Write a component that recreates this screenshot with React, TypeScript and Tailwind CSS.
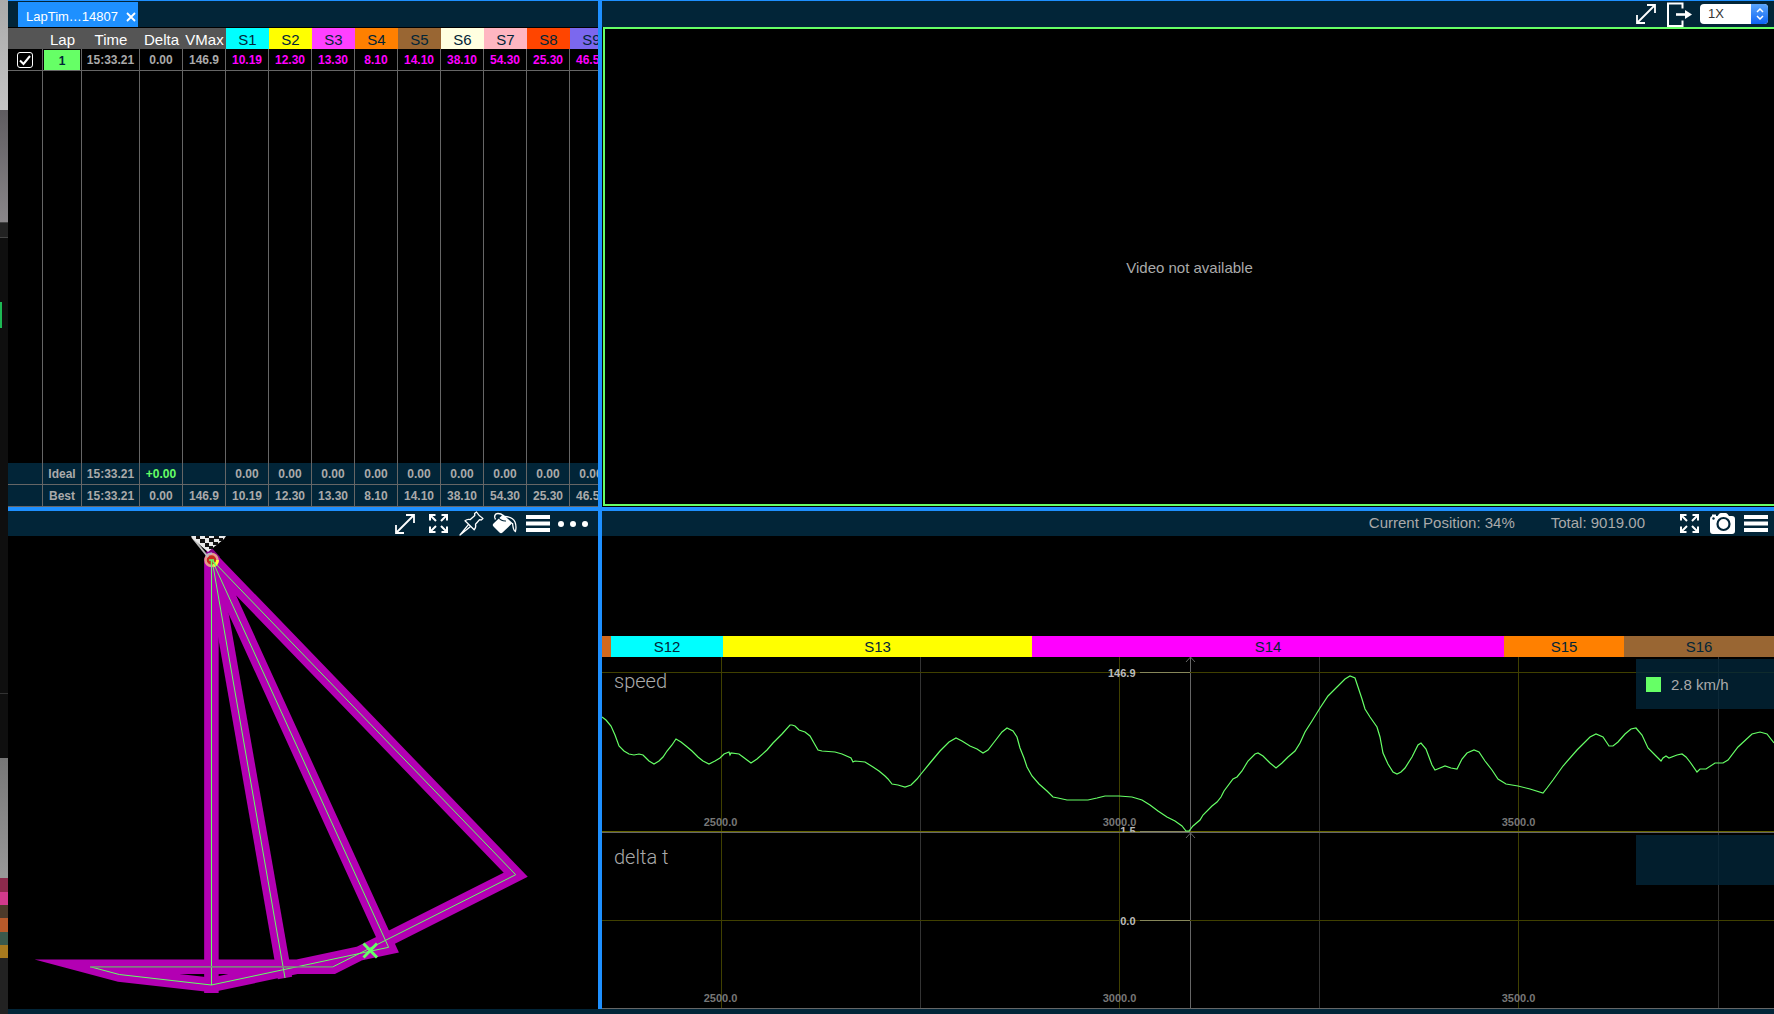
import React, { useState } from 'react';

interface Sector {
  name: string;
  time: string;
  headerClass: string;
}

const sectors: Sector[] = [
  { name: 'S1', time: '10.19', headerClass: 'bg-[#00ffff]' },
  { name: 'S2', time: '12.30', headerClass: 'bg-[#ffff00]' },
  { name: 'S3', time: '13.30', headerClass: 'bg-[#ff40ff]' },
  { name: 'S4', time: '8.10', headerClass: 'bg-[#ff8000]' },
  { name: 'S5', time: '14.10', headerClass: 'bg-[#996633]' },
  { name: 'S6', time: '38.10', headerClass: 'bg-[#ffffe0]' },
  { name: 'S7', time: '54.30', headerClass: 'bg-[#ffb6c1]' },
  { name: 'S8', time: '25.30', headerClass: 'bg-[#ff4500]' },
  { name: 'S9', time: '46.50', headerClass: 'bg-[#7b68ee]' },
];

const segments = [
  { name: '', className: 'flex-[9] bg-[#d2691e]' },
  { name: 'S12', className: 'flex-[112] bg-[#00ffff]' },
  { name: 'S13', className: 'flex-[309] bg-[#ffff00]' },
  { name: 'S14', className: 'flex-[472] bg-[#ff00ff]' },
  { name: 'S15', className: 'flex-[120] bg-[#ff8000]' },
  { name: 'S16', className: 'flex-[150] bg-[#996633]' },
];

const speedTrace = `602,717 606,720 611,726 615,735 619,746 624,751 629,754 634,755 639,754 643,755 646,758 649,761
654,764 659,761 663,757 667,751 672,745 676,739 681,742 686,746 692,751 698,757 703,761 709,764 715,761 720,758
724,754 729,752 730,755 731,753 739,754 743,757 751,763 757,759 767,750 773,743 782,734 790,725 792,725 795,726
799,730 805,732 810,736 814,743 818,750 822,751 835,752 842,754 851,758 853,762 855,761 865,762 873,767 879,771
885,776 888,779 892,784 898,785 905,787 911,785 917,779 921,774 930,763 940,751 949,742 956,738 962,741 970,746
977,749 983,753 988,750 995,741 1002,732 1007,728 1013,731 1017,737 1020,748 1024,758 1027,767 1032,776 1039,784
1047,791 1053,797 1058,798 1067,800 1088,800 1097,798 1105,796 1119,796 1132,797 1142,800 1150,805 1158,811
1167,817 1175,821 1182,826 1186,831 1189,831 1193,826 1200,820 1203,815 1212,806 1217,802 1221,797 1224,791
1233,779 1237,777 1242,771 1248,761 1255,754 1258,753 1263,756 1270,763 1276,768 1282,763 1288,757 1295,751
1300,743 1305,732 1312,721 1320,708 1328,696 1337,687 1345,679 1350,676 1355,678 1358,687 1362,699 1365,709
1370,717 1377,727 1380,737 1383,753 1388,764 1393,772 1397,774 1401,772 1405,768 1412,757 1418,745 1421,743
1426,749 1429,757 1432,765 1435,770 1440,768 1445,766 1451,768 1457,769 1462,759 1467,753 1474,750 1479,752
1485,761 1492,770 1498,779 1506,784 1518,786 1530,789 1543,793 1547,788 1553,780 1563,766 1577,750 1590,737
1596,734 1603,737 1609,746 1613,746 1618,742 1625,734 1631,729 1636,728 1642,735 1648,748 1655,755 1661,761
1663,758 1666,756 1669,758 1677,755 1682,754 1686,757 1690,762 1697,772 1700,769 1706,769 1715,763 1723,763
1728,760 1738,747 1752,734 1760,732 1767,734 1774,743`;

const majorLines = [721, 1119, 1518];
const minorLines = [920, 1319, 1718];

const IconButton: React.FC<{ label: string; wide?: boolean; children: React.ReactNode }> = ({ label, wide, children }) => (
  <button
    type="button"
    aria-label={label}
    className={`flex h-[25px] shrink-0 items-center justify-center text-white ${wide ? 'w-[30px]' : 'w-[25px]'}`}
  >
    {children}
  </button>
);

const DiagonalIcon = () => (
  <svg width="22" height="22" viewBox="0 0 22 22" fill="none" stroke="currentColor" strokeWidth="1.8">
    <path d="M1 20 19 2M11 2h8v8M1 12v8h8" />
  </svg>
);

const FullscreenIcon = () => (
  <svg width="19" height="19" viewBox="0 0 19 19" fill="none" stroke="currentColor" strokeWidth="2">
    <path d="M1 6.500V1h5.500M12.500 1H18v5.500M18 12.500V18h-5.500M6.500 18H1v-5.500" />
    <path d="m1.500 1.500 5.500 5.500M17.500 1.500 12 7M17.500 17.500 12 12M1.500 17.500 7 12" />
  </svg>
);

const PinIcon = () => (
  <svg width="25" height="25" viewBox="0 0 25 25" fill="none" stroke="currentColor" strokeWidth="1.3" strokeLinejoin="round">
    <path d="M17.500 1c1.500 2.500 4 5 6.500 6.500l-1.800 1.500-1.700-.3-4 4.500c.6 2.300.2 4-1.300 5.600L6 9.800c1.800-1.400 3.500-1.600 5.300-1.200l4.500-4.200-.2-1.800z" />
    <path d="M9.800 13.200 1 24l10.800-8.800" />
  </svg>
);

const FillIcon = () => (
  <svg width="25" height="23" viewBox="0 0 25 23" fill="none">
    <path d="M11 2.500 1.500 11.500q-1.500 1.500 0 3l6 6q1.500 1.500 3 0L20.500 11z" fill="white" />
    <path d="M3.500 7.500C1.500 4.500 3 1.500 6 1.500c4 0 8 3.500 8.500 7" stroke="white" strokeWidth="1.400" />
    <path d="M6 5c2 3 4.500 4.200 8 4" stroke="#022538" strokeWidth="1.200" />
    <path d="M12 4.500c5 0 9.500 2 11 5.500 1 2.500 1.300 6 .4 9.500-2.400-1-2.400-5-2.900-8.500" stroke="white" strokeWidth="1.300" />
  </svg>
);

const MenuIcon = () => (
  <svg width="24" height="17" viewBox="0 0 24 17" fill="currentColor">
    <path d="M0 0h24v4H0zM0 6.500h24v4H0zM0 13h24v4H0z" />
  </svg>
);

const DotsIcon = () => (
  <svg width="30" height="6" viewBox="0 0 30 6" fill="currentColor">
    <circle cx="3" cy="3" r="3" />
    <circle cx="15" cy="3" r="3" />
    <circle cx="27" cy="3" r="3" />
  </svg>
);

const CameraIcon = () => (
  <svg width="25" height="21" viewBox="0 0 25 21">
    <path
      d="M7.500 3 9 1q.8-1 2-1h4.500q1.200 0 2 1L19 3h3q3 0 3 3v12q0 3-3 3H3q-3 0-3-3V6q0-2.500 2-3V1.500h4V3z"
      fill="white"
    />
    <circle cx="13.500" cy="11" r="6" fill="white" stroke="#022538" strokeWidth="2.200" />
    <circle cx="3.500" cy="5.500" r="1.200" fill="#022538" />
  </svg>
);

const ExportIcon = () => (
  <svg width="25" height="25" viewBox="0 0 25 25" fill="none" stroke="white">
    <path d="M15.500 6.500V1.500H1v22.500h14.500v-5.500" strokeWidth="2" />
    <path d="M9 12.500h10" strokeWidth="2.600" />
    <path d="M18 8v9l7-4.500z" fill="white" stroke="none" />
  </svg>
);

const box = 'border-r border-b border-[#666] text-center';
const cell = 'border-r border-b border-[#666] px-0 pt-0.5 pb-0 text-center';

const LapTable = () => {
  const [checked, setChecked] = useState(true);

  return (
    <table className="h-full w-[605px] table-fixed border-separate border-spacing-0 text-[12px] leading-[19px] font-bold text-[#aaa]">
      <colgroup>
        <col className="w-[35px]" />
        <col className="w-[39px]" />
        <col className="w-[58px]" />
        <col className="w-[43px]" />
        <col className="w-[43px]" />
        {sectors.map(s => <col key={s.name} className="w-[43px]" />)}
      </colgroup>
      <thead>
        <tr className="h-[21px] bg-[#555] text-[15px] font-normal text-white">
          <th className="p-0" aria-label="Visible" />
          {['Lap', 'Time', 'Delta', 'VMax'].map(h => (
            <th key={h} className="px-0 pt-0.5 pb-0 text-center font-normal">{h}</th>
          ))}
          {sectors.map(s => (
            <th key={s.name} className={`px-0 pt-0.5 pb-0 text-center font-normal text-[#022538] ${s.headerClass}`}>{s.name}</th>
          ))}
        </tr>
      </thead>
      <tbody>
        <tr className="h-[22px]">
          <td className={`${box} p-0`}>
            <label className="relative ml-[9px] block size-4">
              <input
                type="checkbox"
                aria-label="Show lap 1"
                checked={checked}
                onChange={e => setChecked(e.target.checked)}
                className="block size-4 appearance-none rounded-[3px] border border-white bg-black"
              />
              {checked && (
                <svg className="pointer-events-none absolute inset-0" width="16" height="16" viewBox="0 0 16 16" fill="none" stroke="white" strokeWidth="2">
                  <path d="m3 8.500 3.500 3.500L13 4" />
                </svg>
              )}
            </label>
          </td>
          <td className={`${box} p-0 text-[#022538]`}>
            <div className="mx-px h-5 bg-[#66ff66] leading-[22px]">1</div>
          </td>
          <td className={cell}>15:33.21</td>
          <td className={cell}>0.00</td>
          <td className={cell}>146.9</td>
          {sectors.map(s => (
            <td key={s.name} className={`${cell} text-[#ff00ff]`}>{s.time}</td>
          ))}
        </tr>
        <tr aria-hidden="true">
          {Array.from({ length: 5 + sectors.length }, (_, i) => (
            <td key={i} className="border-r border-[#666] p-0" />
          ))}
        </tr>
      </tbody>
      <tfoot className="bg-[#022538]">
        <tr className="h-[22px]">
          <td className={cell} />
          <td className={cell}>Ideal</td>
          <td className={cell}>15:33.21</td>
          <td className={`${cell} text-[#66ff66]`}>+0.00</td>
          <td className={cell} />
          {sectors.map(s => <td key={s.name} className={cell}>0.00</td>)}
        </tr>
        <tr className="h-[22px]">
          <td className={cell} />
          <td className={cell}>Best</td>
          <td className={cell}>15:33.21</td>
          <td className={cell}>0.00</td>
          <td className={cell}>146.9</td>
          {sectors.map(s => <td key={s.name} className={cell}>{s.time}</td>)}
        </tr>
      </tfoot>
    </table>
  );
};

const TrackMap = () => (
  <svg className="block h-full w-full" viewBox="8 536 590 473" fill="none">
    {/* road surface */}
    <g stroke="#b300b3" strokeWidth="14.5" strokeMiterlimit="12">
      <path d="M212 560 515.700 874.700 333.200 966.700H90L119.300 974.500 211.400 985 388.600 947.300 212 560" />
      <path d="M211.400 558V993" />
      <path d="M212 560 285 978" />
    </g>
    <path d="m204 560 3-10 3-4 10 11-8 6z" fill="#8a008a" />
    {/* driven line */}
    <g stroke="#66ff66" strokeWidth="1">
      <path d="M212 560 515.700 874.700 333.200 966.700H90L119.300 974.500 211.400 985 388.600 947.300 212 560" />
      <path d="M211.500 560V985M212 560 285 978" />
    </g>
    <path d="M90 966.700H333" stroke="#808080" strokeWidth="1.500" />
    {/* start / finish */}
    <circle cx="211.500" cy="560" r="6" stroke="#e89a8c" strokeWidth="2.500" fill="#c8281e" />
    <path d="M217.500 560a6 6 0 0 1-4 5.700" stroke="#ffff33" strokeWidth="3" />
    <path d="M207 555a6 6 0 0 1 5-1.500" stroke="#b8b0c8" strokeWidth="2" />
    <path d="M209 560h5M211.500 560v7M213 561l3 5" stroke="#66ff66" strokeWidth="1.500" />
    <path d="M192 537 208 557" stroke="#bbb" strokeWidth="2" />
    <path d="M191 536h35l-2 3c-6 5-9 7-16 13L193 539z" fill="#e8e8e8" />
    <path
      d="M196 536h4v3h-4zM205 536h4v2h-4zM214 536h5v3h-5zM200 539h5v4h-5zM209 538h5v4h-5zM219 538h4v3h-4zM205 543h4v4h-4zM213 542h5v3h-5zM209 546h4v3h-4z"
      fill="#111"
    />
    {/* current position */}
    <path d="m363.500 943.500 13.500 14m0-14-13.500 14" stroke="#66ff66" strokeWidth="3" />
  </svg>
);

const Grid: React.FC<{ top: number; bottom: number }> = ({ top, bottom }) => (
  <>
    {majorLines.map(x => <path key={x} d={`M${x + 0.5} ${top}V${bottom}`} stroke="#404000" />)}
    {minorLines.map(x => <path key={x} d={`M${x + 0.5} ${top}V${bottom}`} stroke="#333" />)}
    <path d={`M1190.500 ${top}V${bottom}M1186 ${top + 5}l4.500-5 4.500 5`} stroke="#666" />
  </>
);

const XLabels: React.FC<{ y: number }> = ({ y }) => (
  <g fill="#777" textAnchor="middle">
    <text x="720.500" y={y}>2500.0</text>
    <text x="1119.500" y={y}>3000.0</text>
    <text x="1518.500" y={y}>3500.0</text>
  </g>
);

const SpeedChart = () => (
  <svg className="block h-full w-full text-[11px] font-bold" viewBox="602 657 1172 175" fill="none">
    <Grid top={657} bottom={832} />
    <path d="M602 672.500h1172" stroke="#404000" />
    <path d="M602 831.500h1172" stroke="#666600" />
    <XLabels y={826} />
    <path d="M1140 672.500h50M1140 831.500h50" stroke="#87875a" />
    <g fill="#bbb" textAnchor="end">
      <text x="1135.500" y="677">146.9</text>
      <text x="1135.500" y="835">1.5</text>
    </g>
    <polyline points={speedTrace} stroke="#66ff66" strokeWidth="1.2" />
  </svg>
);

const DeltaChart = () => (
  <svg className="block h-full w-full text-[11px] font-bold" viewBox="602 833 1172 175" fill="none">
    <Grid top={833} bottom={1008} />
    <path d="M602 920.500h1172" stroke="#404000" />
    <XLabels y={1002} />
    <path d="M1140 920.500h50" stroke="#87875a" />
    <text x="1135.500" y="925" fill="#bbb" textAnchor="end">0.0</text>
  </svg>
);

const Plot: React.FC<{ title: string; value?: string; children: React.ReactNode }> = ({ title, value, children }) => (
  <div className="relative min-h-0 flex-1 overflow-hidden border-b border-[#666]">
    {children}
    <h2 className="absolute top-3 left-3 font-[Roboto] text-[20px] leading-6 font-light text-[#aaa]">{title}</h2>
    <div className="absolute top-0.5 right-0 flex h-[50px] w-[138px] items-center gap-2.5 bg-[#022538]/80 pl-2.5">
      {value && (
        <>
          <span className="size-[15px] bg-[#66ff66]" />
          <span className="pt-0.5 text-[15px] text-[#aaa]">{value}</span>
        </>
      )}
    </div>
  </div>
);

/* slice of the window that lies behind the analyser */
const BackgroundStrip = () => (
  <div className="flex w-2 shrink-0 flex-col bg-[#0f0f0f]">
    <div className="flex-[110] bg-linear-to-b from-[#aaa] to-[#c4c4c4]" />
    <div className="flex-[112] bg-linear-to-b from-[#5f5c60] to-[#8a878a]" />
    <div className="flex-[14] border-y border-[#444] bg-[#222]" />
    <div className="flex-[65]" />
    <div className="w-0.5 flex-[26] bg-[#1db954]" />
    <div className="flex-[365]" />
    <div className="flex-[64] border-t border-[#333]" />
    <div className="flex-[121] bg-linear-to-b from-[#777] to-[#999]" />
    <div className="flex flex-[80] flex-col">
      <div className="flex-1 bg-[#8c2a4c]" />
      <div className="flex-1 bg-[#d23a8c]" />
      <div className="flex-1 bg-[#4c3a2a]" />
      <div className="flex-1 bg-[#b85a2a]" />
      <div className="flex-1 bg-[#3a5a4c]" />
      <div className="flex-1 bg-[#a87a1e]" />
    </div>
    <div className="flex-[56] bg-[#222]" />
  </div>
);

const App: React.FC = () => {
  const [speed, setSpeed] = useState('1X');

  return (
    <div className="flex h-screen overflow-hidden bg-black font-['Liberation_Sans',Arial,sans-serif]">
      <BackgroundStrip />
      <main className="flex min-w-0 flex-1 flex-col border-t border-[#1e90ff]">
        <div className="flex min-h-0 flex-[506]">
          <section className="flex min-w-0 flex-[590] flex-col overflow-hidden">
            <div className="flex h-[27px] shrink-0 border-b border-black bg-[#022538] pt-px pl-2.5">
              <div className="flex h-[25px] w-[120px] items-center justify-between bg-[#1e90ff] pt-1 pr-0.5 pl-2 text-[13px] text-white">
                <span>LapTim…14807</span>
                <button type="button" aria-label="Close tab">
                  <svg width="10" height="10" viewBox="0 0 10 10" stroke="currentColor" strokeWidth="1.800">
                    <path d="m1 1 8 8M9 1 1 9" />
                  </svg>
                </button>
              </div>
            </div>
            <div className="min-h-0 flex-1">
              <LapTable />
            </div>
          </section>
          <div className="w-1 shrink-0 bg-[#1e90ff]" />
          <section className="flex min-w-0 flex-[1172] flex-col pb-px">
            <div className="flex h-[26px] shrink-0 items-center justify-end gap-2 bg-[#022538] pr-1.5">
              <IconButton label="Expand video"><DiagonalIcon /></IconButton>
              <IconButton label="Export"><ExportIcon /></IconButton>
              <label className="relative block">
                <select
                  aria-label="Playback speed"
                  value={speed}
                  onChange={e => setSpeed(e.target.value)}
                  className="block h-5 w-[68px] appearance-none rounded bg-white pl-2 text-[13px] leading-5 text-[#333]"
                >
                  <option>1X</option>
                  <option>2X</option>
                  <option>4X</option>
                </select>
                <span className="pointer-events-none absolute inset-y-0 right-0 flex w-[17px] items-center justify-center rounded-r bg-linear-to-b from-[#5aa5fa] to-[#0a64f5]">
                  <svg width="8" height="12" viewBox="0 0 8 12" fill="none" stroke="white" strokeWidth="1.500">
                    <path d="m1 4 3-3 3 3M1 8l3 3 3-3" />
                  </svg>
                </span>
              </label>
            </div>
            <div className="ml-px flex flex-1 items-center justify-center border-2 border-r-0 border-[#66ff66] pt-1 text-[15px] text-[#aaa]">
              Video not available
            </div>
          </section>
        </div>

        <div className="h-1 shrink-0 bg-[#1e90ff]" />

        <div className="flex min-h-0 flex-[498]">
          <section className="flex min-w-0 flex-[590] flex-col">
            <div className="flex h-[25px] shrink-0 items-center justify-end gap-2 bg-[#022538] pr-2.5">
              <IconButton label="Expand map"><DiagonalIcon /></IconButton>
              <IconButton label="Fit map"><FullscreenIcon /></IconButton>
              <IconButton label="Pin map"><PinIcon /></IconButton>
              <IconButton label="Track colour"><FillIcon /></IconButton>
              <IconButton label="Map menu"><MenuIcon /></IconButton>
              <IconButton label="More" wide><DotsIcon /></IconButton>
            </div>
            <div className="min-h-0 flex-1">
              <TrackMap />
            </div>
          </section>
          <div className="w-1 shrink-0 bg-[#1e90ff]" />
          <section className="flex min-w-0 flex-[1172] flex-col">
            <div className="flex h-[25px] shrink-0 items-center justify-end gap-2 bg-[#022538] pr-1.5 text-[15px] text-[#aaa]">
              <span className="mr-7">Current Position: 34%</span>
              <span className="mr-6">Total: 9019.00</span>
              <IconButton label="Fit charts"><FullscreenIcon /></IconButton>
              <IconButton label="Take snapshot"><CameraIcon /></IconButton>
              <IconButton label="Chart menu"><MenuIcon /></IconButton>
            </div>
            <div className="mt-[100px] flex h-[21px] shrink-0 text-[15px] leading-[22px] text-[#022538]">
              {segments.map(s => (
                <div key={s.name} className={`overflow-hidden text-center ${s.className}`}>{s.name}</div>
              ))}
            </div>
            <Plot title="speed" value="2.8 km/h">
              <SpeedChart />
            </Plot>
            <Plot title="delta t">
              <DeltaChart />
            </Plot>
          </section>
        </div>

        <footer className="h-[5px] shrink-0 bg-[#022538]" />
      </main>
    </div>
  );
};

export default App;
